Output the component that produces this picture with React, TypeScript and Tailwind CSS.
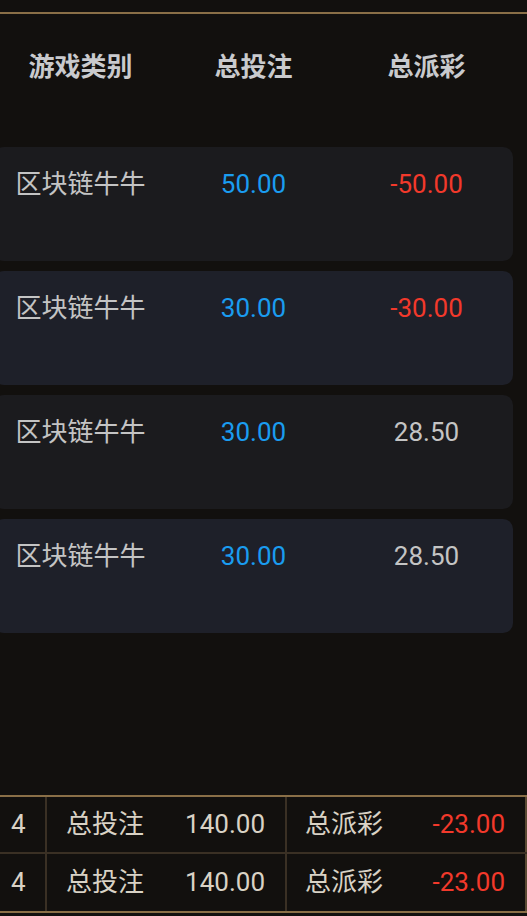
import React from "react";

const rows = [
  { name: "区块链牛牛", bet: "50.00", win: "-50.00", neg: true, bg: "bg-[#1b1b1e]" },
  { name: "区块链牛牛", bet: "30.00", win: "-30.00", neg: true, bg: "bg-[#1e2029]" },
  { name: "区块链牛牛", bet: "30.00", win: "28.50", neg: false, bg: "bg-[#1b1b1e]" },
  { name: "区块链牛牛", bet: "30.00", win: "28.50", neg: false, bg: "bg-[#1e2029]" },
];

function FooterRow({ last }: { last?: boolean }) {
  return (
    <div
      className={
        "flex h-[57px] items-center text-[26px] text-[#d9d2c5] " +
        (last ? "" : "border-b-[2px] border-[#3a3024]")
      }
    >
      <div className="flex h-full w-[47px] items-center border-r-[2px] border-[#3a3024] pl-[11px]">4</div>
      <div className="flex h-full w-[240px] items-center justify-between border-r-[2px] border-[#3a3024] pl-[19px] pr-[20px]">
        <span>总投注</span>
        <span>140.00</span>
      </div>
      <div className="flex h-full w-[240px] items-center justify-between border-r-[2px] border-[#5a4a33] pl-[18px] pr-[20px]">
        <span>总派彩</span>
        <span className="text-[#f2392b]">-23.00</span>
      </div>
    </div>
  );
}

export default function App() {
  return (
    <div
      className="flex h-[916px] w-[527px] flex-col overflow-hidden bg-[#12100e]"
      style={{ fontFamily: "Roboto, 'Noto Sans CJK SC', sans-serif" }}
    >
      <div className="h-[12px]" />
      <div className="h-[2px] bg-[#8a6f47]" />
      <div className="-ml-[6px] grid h-[106px] w-[519px] grid-cols-3 items-center text-center text-[26px] font-bold text-[#c9cacd]">
        <div>游戏类别</div>
        <div>总投注</div>
        <div>总派彩</div>
      </div>
      <div className="-ml-[6px] mt-[27px] flex w-[519px] flex-col gap-[10px]">
        {rows.map((r, i) => (
          <div
            key={i}
            className={"grid h-[114px] grid-cols-3 rounded-[10px] pt-[19px] text-center text-[26px] leading-[36px] " + r.bg}
          >
            <div className="text-[#c4c4c4]">{r.name}</div>
            <div className="text-[#1a9cf0]">{r.bet}</div>
            <div className={r.neg ? "text-[#f2392b]" : "text-[#c4c4c4]"}>{r.win}</div>
          </div>
        ))}
      </div>
      <div className="mt-auto mb-[3px] border-y-[2px] border-[#8a6f47]">
        <FooterRow />
        <FooterRow last />
      </div>
    </div>
  );
}
